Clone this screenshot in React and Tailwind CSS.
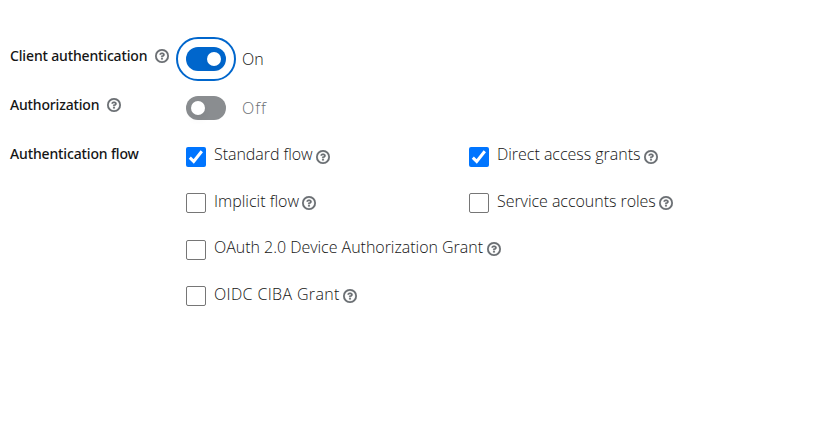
import React from 'react';

function HelpIcon() {
  return (
    <svg className="block h-3.5 w-3.5 shrink-0" viewBox="0 0 1024 1024" fill="#6a6e73" stroke="#6a6e73" strokeWidth="12">
      <path d="M521.3 576C627.5 576 713.7 502 713.7 413.7S627.6 253.6 521.3 253.6C366 253.6 334.5 337.7 329.2 407.2c0 7.1 6 8.8 14.3 8.8H445c5.5 0 13-.5 15.8-9.5 0-43.9 122.1-49.4 122.1 7.1 0 28.3-26.7 57.3-61.6 59.4s-74 6.8-74 48.7v32.1c0 17 8.8 22.2 24.7 22.2zM575.3 751.3v-96a16 16 0 0 0-16-16h-96a16 16 0 0 0-16 16v96a16 16 0 0 0 16 16h96a16 16 0 0 0 16-16M512 896a384 384 0 1 1 0-768 384 384 0 0 1 0 768M512 0a512 512 0 1 0 0 1024A512 512 0 0 0 512 0" />
    </svg>
  );
}

function Label({ children, textClass, help }) {
  return (
    <div className="-mt-px flex h-[21px] w-[176px] items-center">
      <span className={"whitespace-nowrap font-['Noto_Sans',sans-serif] text-sm font-medium leading-[21px] text-[#151515] " + textClass}>{children}</span>
      {help && <span className="ml-2"><HelpIcon /></span>}
    </div>
  );
}

function Toggle({ on, focused }) {
  return (
    <span className={"flex h-6 w-10 rounded-full p-[4.8px] " + (on ? "justify-end bg-[#06c] " : "justify-start bg-[#8a8d90] ") + (focused ? "outline-2 outline-offset-8 outline-[#06c]" : "")}>
      <span className="h-[14.4px] w-[14.4px] rounded-full bg-white shadow-[0_4px_8px_rgba(0,0,0,0.06)]" />
    </span>
  );
}

function Check({ label, checked, textClass, helpClass = "mt-2" }) {
  return (
    <div className="flex h-6 items-start">
      <span className={"mt-[5px] flex h-5 w-5 shrink-0 items-center justify-center rounded-[2px] " + (checked ? "bg-[#0075ff]" : "border border-[#767676] bg-white")}>
        {checked && (
          <svg className="h-5 w-5" viewBox="0 0 20 20" fill="none" stroke="white" strokeWidth="3">
            <path d="M3.8 10.6 7.7 14.4 15.8 4.2" />
          </svg>
        )}
      </span>
      <span className={"ml-2 whitespace-nowrap text-base leading-6 font-light text-[#151515] " + textClass}>{label}</span>
      <span className={"ml-1 " + helpClass}><HelpIcon /></span>
    </div>
  );
}

export default function App() {
  return (
    <main className="h-[438px] w-[816px] overflow-hidden bg-white pl-2.5 pt-[46px] font-['Open_Sans',sans-serif]">
      <div className="flex h-[49px] items-start">
        <Label textClass="w-[137px] tracking-[-0.15px]" help>Client authentication</Label>
        <div className="mt-px flex items-center gap-4"><Toggle on focused /><span className="text-base leading-6 font-light text-[#151515]">On</span></div>
      </div>
      <div className="flex h-[49px] items-start">
        <Label textClass="w-[89px] tracking-[-0.17px]" help>Authorization</Label>
        <div className="mt-px flex items-center gap-4"><Toggle /><span className="text-base leading-6 font-light tracking-[1px] text-[#6a6e73]">Off</span></div>
      </div>
      <div className="flex items-start">
        <Label textClass="tracking-[-0.14px]">Authentication flow</Label>
        <div className="grid -mt-[2px] grid-cols-[283px_300px] auto-rows-[46.4px]">
          <Check label="Standard flow" checked textClass="w-[98px] tracking-[-0.05px]" />
          <Check label="Direct access grants" checked textClass="w-[143px] tracking-[-0.02px]" />
          <Check label="Implicit flow" textClass="w-[84px] pt-px" />
          <Check label="Service accounts roles" textClass="w-[158px] pt-px tracking-[-0.04px]" />
          <div className="col-span-2"><Check label="OAuth 2.0 Device Authorization Grant" textClass="w-[269px] tracking-[-0.03px]" helpClass="mt-[7px]" /></div>
          <div className="col-span-2"><Check label="OIDC CIBA Grant" textClass="w-[125px] pt-px tracking-[0.35px]" /></div>
        </div>
      </div>
    </main>
  );
}
